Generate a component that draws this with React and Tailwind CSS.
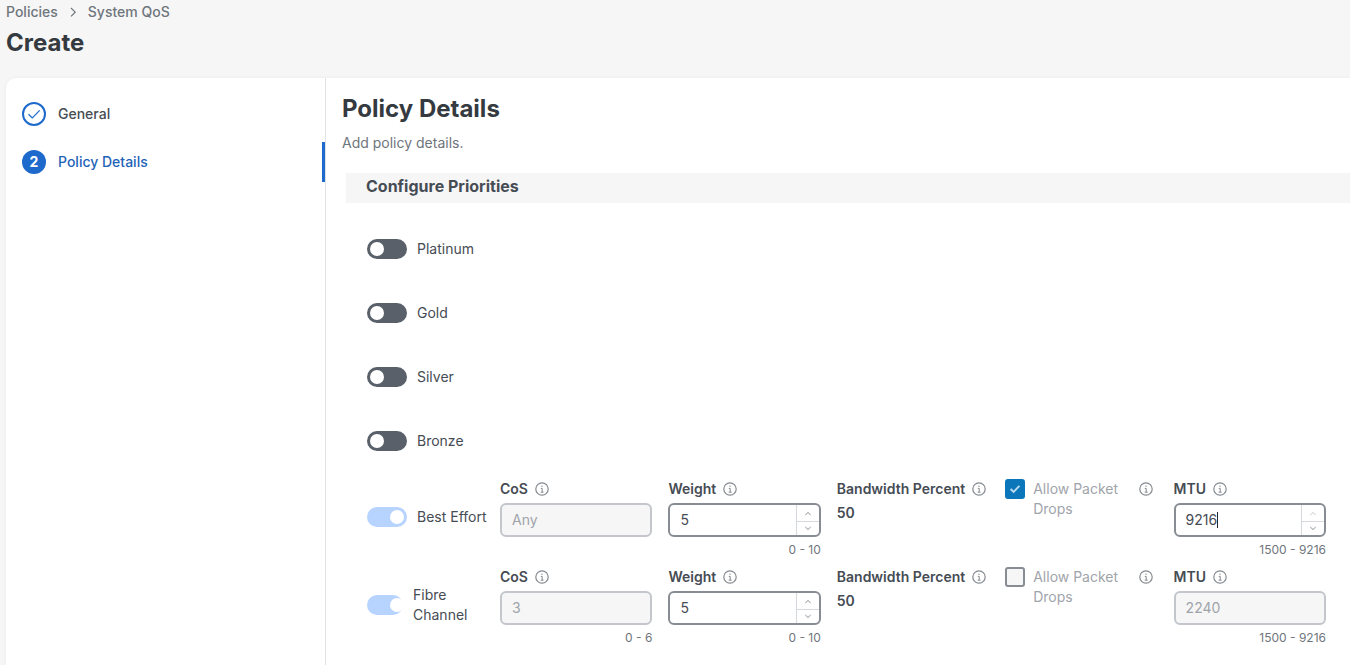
import React, { useId, useState } from "react";

function InfoIcon() {
  return (
    <svg viewBox="0 0 14 14" className="size-3.5 shrink-0" fill="none" stroke="#858a91" aria-hidden="true">
      <circle cx="7" cy="7" r="6.2" strokeWidth="1.2" />
      <path d="M5.8 6.4h1.4v3.8M5.7 10.2h2.9" strokeWidth="1" />
      <circle cx="7" cy="4.2" r="0.7" fill="#858a91" stroke="none" />
    </svg>
  );
}

function InfoButton({ about }) {
  return (
    <button type="button" aria-label={`About ${about}`} className="flex shrink-0 items-center">
      <InfoIcon />
    </button>
  );
}

function Toggle({ label, locked = false }) {
  const id = useId();
  const [on, setOn] = useState(locked);
  return (
    <div className={locked ? "flex h-10 items-center gap-2.5 pr-2" : "flex h-16 items-center gap-2.5"}>
      <input
        id={id}
        type="checkbox"
        role="switch"
        checked={on}
        disabled={locked}
        onChange={(e) => setOn(e.target.checked)}
        className="relative h-5 w-10 min-w-9 appearance-none rounded-full bg-[#596069] before:absolute before:top-[3px] before:left-[3px] before:size-3.5 before:rounded-full before:bg-white checked:bg-[#3b82f6] checked:before:left-[23px] disabled:bg-[#b7d3ff]"
      />
      <label htmlFor={id} className="leading-5">
        {label}
      </label>
    </div>
  );
}

function Stepper({ atMax = false, name, onStep }) {
  return (
    <div className="flex w-[23px] shrink-0 flex-col border-l border-[#d5d8dc]">
      <button
        type="button"
        aria-label={`Increase ${name}`}
        disabled={atMax}
        onClick={() => onStep(1)}
        className="flex flex-1 items-center justify-center border-b border-[#d5d8dc] pt-0.5 text-[#8b9097] disabled:text-[#c5c8cc]"
      >
        <svg viewBox="0 0 8 5" className="h-[5px] w-2" fill="none" stroke="currentColor">
          <path d="M1.3 4L4 1.5 6.7 4" />
        </svg>
      </button>
      <button
        type="button"
        aria-label={`Decrease ${name}`}
        onClick={() => onStep(-1)}
        className="flex flex-1 items-center justify-center text-[#8b9097]"
      >
        <svg viewBox="0 0 8 5" className="h-[5px] w-2" fill="none" stroke="currentColor">
          <path d="M1.3 1L4 3.5 6.7 1" />
        </svg>
      </button>
    </div>
  );
}

function Field({ label, initial, hint, max, disabled = false, caret = false }) {
  const id = useId();
  const [value, setValue] = useState(initial);
  return (
    <div className="min-w-0">
      <div className="mb-1 flex items-center gap-[7px]">
        <label htmlFor={id} className="font-semibold">
          {label}
        </label>
        <InfoButton about={label} />
      </div>
      <div
        className={
          disabled
            ? "flex h-[34px] overflow-hidden rounded-md border-2 border-[#c3c6ca] bg-[#f6f6f6] text-[#9fa4aa]"
            : "flex h-[34px] overflow-hidden rounded-md border-2 border-[#888d94] bg-white"
        }
      >
        <div className="flex min-w-0 flex-1 items-center pl-2.5">
          <input
            id={id}
            type="text"
            inputMode="numeric"
            value={value}
            disabled={disabled}
            onChange={(e) => setValue(e.target.value)}
            className={caret ? "field-sizing-content caret-transparent outline-none" : "w-full min-w-0 outline-none"}
          />
          {caret && <span className="h-4 w-px bg-[#23282e]" />}
        </div>
        {!disabled && (
          <Stepper
            name={label}
            atMax={Number(value) >= max}
            onStep={(d) => setValue((v) => String(Math.min(max, Math.max(0, Number(v) + d))))}
          />
        )}
      </div>
      {hint && <p className="mt-[3px] text-right text-xs leading-5 text-[#6f757c]">{hint}</p>}
    </div>
  );
}

function PacketDrops({ allowed }) {
  const id = useId();
  return (
    <div className="flex items-start justify-between pr-[5px]">
      <div className="flex gap-2">
        <span className="grid size-5 shrink-0">
          <input
            id={id}
            type="checkbox"
            checked={allowed}
            disabled
            readOnly
            className="col-start-1 row-start-1 size-5 appearance-none rounded-[3px] border-2 border-[#888d94] bg-[#f6f6f6] checked:border-[#0b76ba] checked:bg-[#0b76ba]"
          />
          {allowed && (
            <svg
              viewBox="0 0 20 20"
              className="pointer-events-none z-10 col-start-1 row-start-1 size-5"
              fill="none"
              stroke="#b9d9ee"
              strokeWidth="2"
            >
              <path d="M5.6 10l3 2.9 5.8-6" />
            </svg>
          )}
        </span>
        <label htmlFor={id} className="w-[90px] text-[#9fa4aa]">
          Allow Packet Drops
        </label>
      </div>
      <div className="flex h-5 items-center">
        <InfoButton about="Allow Packet Drops" />
      </div>
    </div>
  );
}

function PriorityRow({ name, cos, cosHint, drops, mtu, mtuLocked = false }) {
  return (
    <div className="flex min-h-[88px]">
      <div className="w-[133px] shrink-0 pt-[18px]">
        <Toggle label={name} locked />
      </div>
      <div className="grid flex-1 grid-cols-5 gap-4">
        <Field label="CoS" initial={cos} hint={cosHint} disabled />
        <Field label="Weight" initial="5" hint="0 - 10" max={10} />
        <div className="font-semibold">
          <div className="mb-1 flex items-center gap-[7px] whitespace-nowrap">
            Bandwidth Percent
            <InfoButton about="Bandwidth Percent" />
          </div>
          <p>50</p>
        </div>
        <PacketDrops allowed={drops} />
        <Field label="MTU" initial={mtu} hint="1500 - 9216" max={9216} disabled={mtuLocked} caret={!mtuLocked} />
      </div>
    </div>
  );
}

export default function App() {
  return (
    <div className="flex min-h-screen flex-col bg-[#f6f6f6] pl-1.5 font-['Inter',sans-serif] text-sm leading-5 text-[#464c54]">
      <header className="pt-0.5 pb-[19px]">
        <nav aria-label="Breadcrumb" className="flex items-center gap-2.5 font-medium text-[#6f757c]">
          <a href="#policies">Policies</a>
          <svg viewBox="0 0 10 10" className="size-2.5" fill="none" stroke="currentColor" strokeWidth="1.2">
            <path d="M3 1l4.2 4.2L3 9.4" />
          </svg>
          <a href="#system-qos">System QoS</a>
        </nav>
        <h1 className="mt-[5px] text-2xl leading-8 font-bold text-[#343a40]">Create</h1>
      </header>

      <div className="flex flex-1 rounded-tl-[10px] bg-white shadow-[0_0_4px_rgba(0,0,0,0.05)]">
        <aside className="w-80 shrink-0 border-r border-[#dfe1e4] pt-4">
          <ol className="flex flex-col gap-2">
            <li>
              <a href="#general" className="flex h-10 items-center gap-3 pl-4 font-medium">
                <svg viewBox="0 0 24 24" className="size-6" fill="none" stroke="#1d69cc">
                  <circle cx="12" cy="12" r="11" strokeWidth="2" />
                  <path d="M6.5 12.3l3.8 3.7 7.4-7.6" strokeWidth="1.2" />
                </svg>
                General
              </a>
            </li>
            <li>
              <a
                href="#details"
                aria-current="step"
                className="flex h-10 items-center gap-3 border-r-3 border-[#1d69cc] pl-4 font-medium text-[#1f63b8]"
              >
                <span className="flex size-6 items-center justify-center rounded-full bg-[#1d69cc] font-bold text-white">
                  2
                </span>
                Policy Details
              </a>
            </li>
          </ol>
        </aside>

        <main className="min-w-0 flex-1 pt-[15px] pl-4">
          <h2 className="text-2xl leading-8 font-bold text-[#343a40]">Policy Details</h2>
          <p className="mt-2 text-[#6f757c]">Add policy details.</p>
          <section className="mt-5 ml-1">
            <h3 className="bg-[#f6f6f6] pb-1 pl-5 text-base leading-[26px] font-bold text-[#464c54]">
              Configure Priorities
            </h3>
            <div className="pt-3.5 pr-6 pl-[21px]">
              {["Platinum", "Gold", "Silver", "Bronze"].map((name) => (
                <Toggle key={name} label={name} />
              ))}
              <div className="pt-1.5">
                <PriorityRow name="Best Effort" cos="Any" drops mtu="9216" />
                <PriorityRow name="Fibre Channel" cos="3" cosHint="0 - 6" drops={false} mtu="2240" mtuLocked />
              </div>
            </div>
          </section>
        </main>
      </div>
    </div>
  );
}
